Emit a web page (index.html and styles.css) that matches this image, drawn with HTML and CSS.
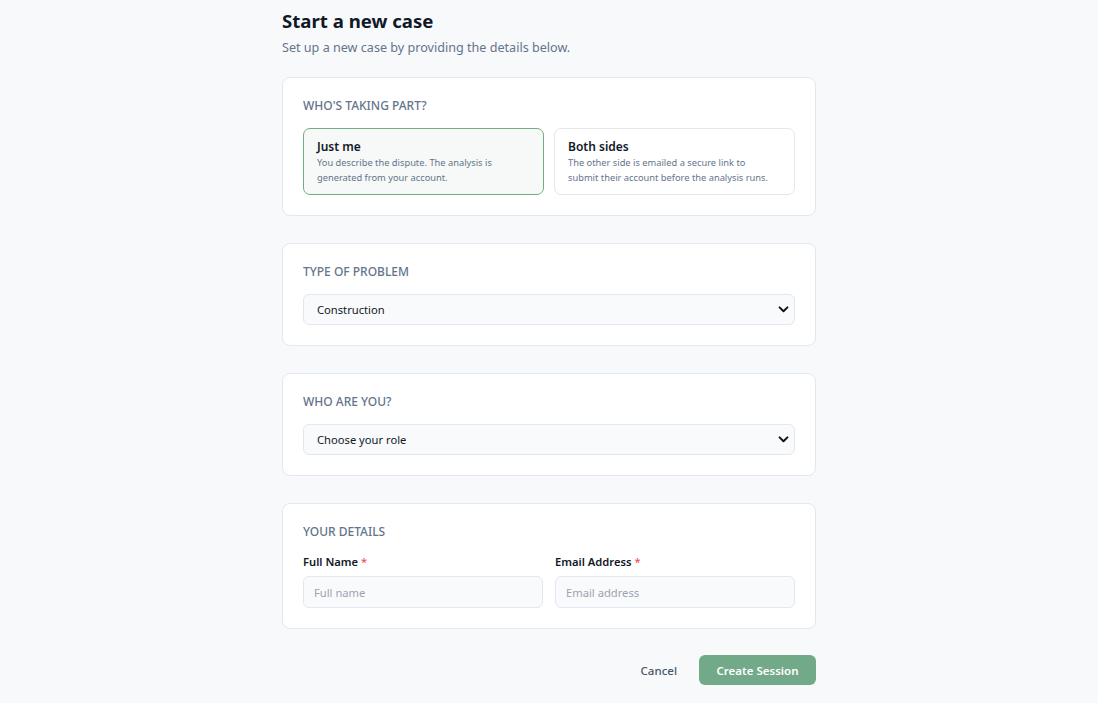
FILE: index.html
```html
<!DOCTYPE html>
<html lang="en">
<head>
<meta charset="utf-8">
<title>Start a new case</title>
<link rel="stylesheet" href="styles.css">
</head>
<body>
<main class="page">
  <header class="head">
    <h1 class="title">Start a new case</h1>
    <p class="subtitle">Set up a new case by providing the details below.</p>
  </header>

  <section class="card">
    <h2 class="card-label">Who's taking part?</h2>
    <div class="options">
      <div class="option selected">
        <div class="option-title">Just me</div>
        <div class="option-desc">You describe the dispute. The analysis is<br>generated from your account.</div>
      </div>
      <div class="option">
        <div class="option-title">Both sides</div>
        <div class="option-desc">The other side is emailed a secure link to<br>submit their account before the analysis runs.</div>
      </div>
    </div>
  </section>

  <section class="card">
    <h2 class="card-label">Type of problem</h2>
    <div class="select-wrap">
      <select class="select">
        <option>Construction</option>
      </select>
      <svg class="chev" viewBox="0 0 12 8" width="11" height="7"><path d="M1.5 1.5 L6 6 L10.5 1.5" fill="none" stroke="#111" stroke-width="2.2" stroke-linecap="round" stroke-linejoin="round"/></svg>
    </div>
  </section>

  <section class="card">
    <h2 class="card-label">Who are you?</h2>
    <div class="select-wrap">
      <select class="select">
        <option>Choose your role</option>
      </select>
      <svg class="chev" viewBox="0 0 12 8" width="11" height="7"><path d="M1.5 1.5 L6 6 L10.5 1.5" fill="none" stroke="#111" stroke-width="2.2" stroke-linecap="round" stroke-linejoin="round"/></svg>
    </div>
  </section>

  <section class="card">
    <h2 class="card-label">Your details</h2>
    <div class="fields">
      <label class="field">
        <span class="field-label">Full Name <span class="req">*</span></span>
        <input class="input" type="text" placeholder="Full name">
      </label>
      <label class="field">
        <span class="field-label">Email Address <span class="req">*</span></span>
        <input class="input" type="email" placeholder="Email address">
      </label>
    </div>
  </section>

  <div class="actions">
    <button class="btn-cancel" type="button">Cancel</button>
    <button class="btn-primary" type="button">Create Session</button>
  </div>
</main>
</body>
</html>
```

FILE: styles.css
```css
* { box-sizing: border-box; }
html, body { margin: 0; padding: 0; }
body {
  background: #f8f9fb;
  font-family: "Noto Sans", "Open Sans", sans-serif;
  color: #0f172a;
}
.page {
  width: 534px;
  margin: 0 auto;
  padding-top: 8px;
  display: flex;
  flex-direction: column;
}
.head { margin-bottom: 21px; }
.title {
  margin: 0;
  font-size: 18.6px;
  line-height: 26px;
  font-weight: 700;
  color: #111827;
}
.subtitle {
  margin: 6px 0 0;
  font-size: 12.6px;
  line-height: 16px;
  color: #64748b;
}
.card {
  background: #fff;
  border: 1px solid #e2e8f0;
  border-radius: 8px;
  padding: 20px 20px 20px;
  margin-bottom: 27px;
}
.card-label {
  margin: 0 0 14px;
  font-size: 12px;
  line-height: 16px;
  font-weight: 500;
  text-transform: uppercase;
  color: #64748b;
}
.options {
  display: grid;
  grid-template-columns: 1fr 1fr;
  gap: 10px;
}
.option {
  border: 1px solid #e2e8f0;
  border-radius: 7px;
  padding: 10px 13px 9px;
  background: #fff;
}
.option.selected {
  border-color: #6fae84;
  background: #f6f9f7;
}
.option-title {
  font-size: 12px;
  line-height: 16px;
  font-weight: 600;
  color: #111827;
}
.option-desc {
  font-size: 9.3px;
  line-height: 15px;
  color: #64748b;
}
.select-wrap {
  position: relative;
}
.select {
  appearance: none;
  -webkit-appearance: none;
  width: 100%;
  height: 31px;
  border: 1px solid #e2e8f0;
  border-radius: 6px;
  background: #f8fafc;
  padding: 0 13px;
  font-family: inherit;
  font-size: 11.2px;
  color: #111827;
}
.chev {
  position: absolute;
  right: 6px;
  top: 12px;
  pointer-events: none;
}
.fields {
  display: grid;
  grid-template-columns: 1fr 1fr;
  gap: 12px;
}
.field {
  display: flex;
  flex-direction: column;
  gap: 6px;
}
.field-label {
  font-size: 11.2px;
  line-height: 16px;
  font-weight: 600;
  color: #111827;
}
.req { color: #ef4444; font-weight: 400; }
.input {
  height: 32px;
  border: 1px solid #e2e8f0;
  border-radius: 6px;
  background: #f8fafc;
  padding: 0 10px;
  font-family: inherit;
  font-size: 11.2px;
  color: #111827;
}
.input::placeholder { color: #9ca3af; }
.actions {
  display: flex;
  justify-content: flex-end;
  align-items: center;
  gap: 22px;
  margin-top: -1px;
}
.btn-cancel {
  background: none;
  border: none;
  padding: 0;
  font-family: inherit;
  font-size: 11.5px;
  font-weight: 500;
  color: #475569;
}
.btn-primary {
  height: 30px;
  width: 117px;
  border: none;
  border-radius: 6px;
  background: #72a989;
  color: #fff;
  font-family: inherit;
  font-size: 11.5px;
  font-weight: 600;
}
```
